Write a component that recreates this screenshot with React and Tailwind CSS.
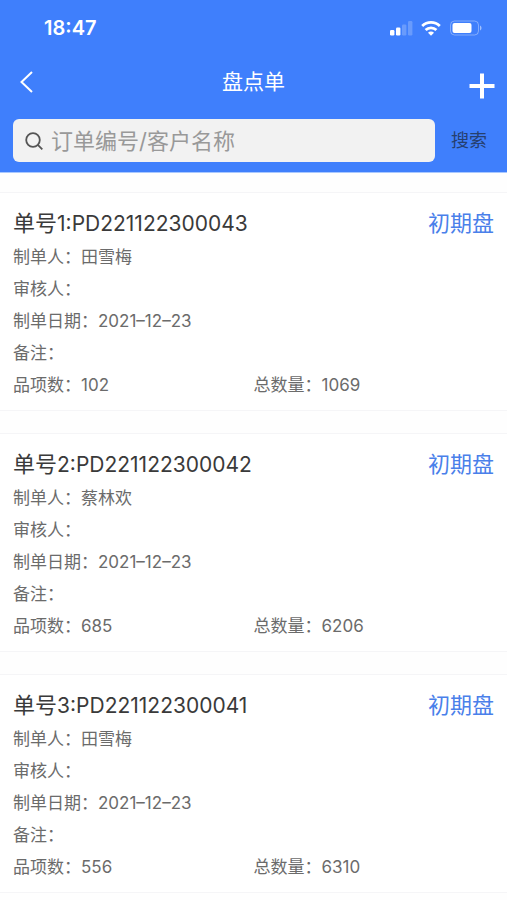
import { useState } from "react"

const orders = [
  { no: "PD221122300043", maker: "田雪梅", auditor: "", date: "2021–12–23", remark: "", items: 102, total: 1069 },
  { no: "PD221122300042", maker: "蔡林欢", auditor: "", date: "2021–12–23", remark: "", items: 685, total: 6206 },
  { no: "PD221122300041", maker: "田雪梅", auditor: "", date: "2021–12–23", remark: "", items: 556, total: 6310 },
]

function StatusBar() {
  return (
    <div className="flex h-14 items-center justify-between pl-11 pr-6">
      <span className="text-xl font-semibold leading-7">18:47</span>
      <div className="flex items-center gap-2">
        <svg width="24" height="16" viewBox="0 0 24 16" fill="currentColor" aria-hidden="true">
          <rect x="1" y="10" width="4.400" height="5.500" rx="1.200" />
          <rect x="7" y="7.500" width="4.400" height="8" rx="1.200" />
          <rect x="13" y="4.500" width="4.400" height="11" rx="1.200" opacity="0.22" />
          <rect x="19" y="1" width="4.400" height="14.500" rx="1.200" opacity="0.22" />
        </svg>
        <svg width="20" height="16" viewBox="0 0 20 16" fill="none" stroke="currentColor" strokeWidth="2.800" aria-hidden="true">
          <path d="M1.200 6a12.600 12.600 0 0 1 17.600 0" />
          <path d="M4.600 10a7.700 7.700 0 0 1 10.800 0" />
          <path d="M10 15.800l-3-3a4.200 4.200 0 0 1 6 0z" fill="currentColor" stroke="none" />
        </svg>
        <svg width="34" height="16" viewBox="0 0 34 16" fill="none" aria-hidden="true">
          <rect x="1.500" y="1" width="28" height="14" rx="4" stroke="currentColor" opacity="0.35" />
          <rect x="3.500" y="3" width="19" height="10" rx="2" fill="currentColor" />
          <path d="M31 5.500c2 .8 2 4.200 0 5z" fill="currentColor" opacity="0.5" />
        </svg>
      </div>
    </div>
  )
}

function Field({ label, value }) {
  return (
    <div className="flex-1">
      {label}：{value}
    </div>
  )
}

function OrderCard({ order, index }) {
  return (
    <li className="border-y border-[#f5f5f7] bg-white px-[13px] pt-3 pb-[9px] text-[17px] leading-8 text-[#6b6b6b]">
      <div className="flex h-9 items-center justify-between text-[22px] leading-9">
        <h2 className="text-[#3a3a3a]">
          单号
          <span className="text-[21px]">
            {index + 1}:{order.no}
          </span>
        </h2>
        <span className="text-[#4a80ea]">初期盘</span>
      </div>
      <Field label="制单人" value={order.maker} />
      <Field label="审核人" value={order.auditor} />
      <Field label="制单日期" value={order.date} />
      <Field label="备注" value={order.remark} />
      <div className="flex">
        <Field label="品项数" value={order.items} />
        <Field label="总数量" value={order.total} />
      </div>
    </li>
  )
}

export default function App() {
  const [keyword, setKeyword] = useState("")

  return (
    <div className="min-h-screen bg-[#fefefe] font-['Inter','Noto_Sans_CJK_SC',sans-serif]">
      <header className="border-b border-[#a9c8ff] bg-[#3f7ffc] text-white">
        <StatusBar />
        <div className="grid grid-cols-[1fr_auto_1fr] items-center px-3 py-2">
          <button type="button" aria-label="返回" className="justify-self-start px-2 py-1">
            <svg width="13" height="22" viewBox="0 0 13 22" fill="none" stroke="currentColor" strokeWidth="2" aria-hidden="true">
              <path d="M12 1 1.500 11 12 21" />
            </svg>
          </button>
          <h1 className="text-[21px] leading-9">盘点单</h1>
          <button type="button" aria-label="新增" className="justify-self-end pt-2">
            <svg width="26" height="26" viewBox="0 0 26 26" fill="none" stroke="currentColor" strokeWidth="4" aria-hidden="true">
              <path d="M13 0.500v25M0.500 13h25" />
            </svg>
          </button>
        </div>
        <form className="flex items-center pt-[11px] pr-5 pb-[10px] pl-[13px]" onSubmit={(e) => e.preventDefault()}>
          <label className="flex h-[43px] min-w-0 flex-1 items-center gap-2 rounded-md bg-[#f2f2f2] pl-3 text-[#555555]">
            <svg width="18" height="18" viewBox="0 0 18 18" fill="none" stroke="currentColor" strokeWidth="1.800" className="shrink-0" aria-hidden="true">
              <circle cx="8" cy="8" r="6.800" />
              <path d="m12.800 12.800 4.500 4.500" />
            </svg>
            <input
              type="text"
              aria-label="订单编号/客户名称"
              placeholder="订单编号/客户名称"
              value={keyword}
              onChange={(e) => setKeyword(e.target.value)}
              className="min-w-0 flex-1 bg-transparent text-[22px] leading-8 text-[#333333] outline-none placeholder:text-[#999999]"
            />
          </label>
          <button type="submit" className="pl-4 text-lg leading-7 text-[#26406f]">
            搜索
          </button>
        </form>
      </header>
      <ul className="flex flex-col gap-[22px] pt-[19px]">
        {orders.map((order, i) => (
          <OrderCard key={order.no} order={order} index={i} />
        ))}
      </ul>
    </div>
  )
}
